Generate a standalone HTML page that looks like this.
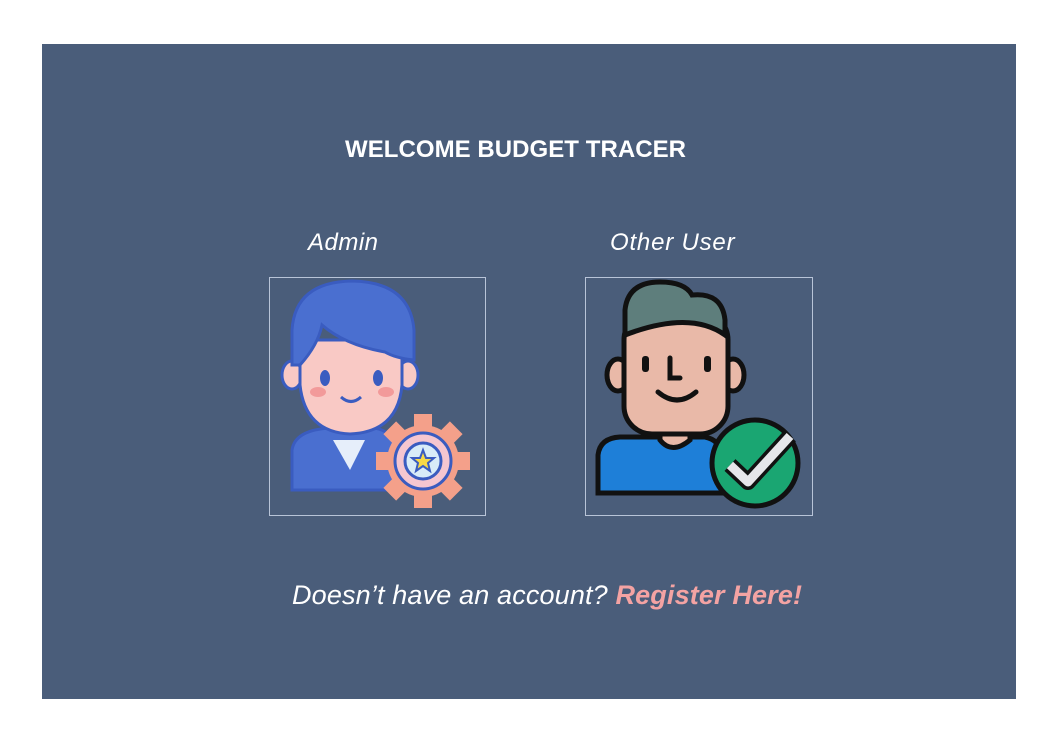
<!DOCTYPE html>
<html><head><style>
body{margin:0;width:1054px;height:750px;background:#fff;position:relative;overflow:hidden;font-family:"Liberation Sans",sans-serif}
.panel{position:absolute;left:42px;top:44px;width:974px;height:655px;background:#4a5d7a}
.t{position:absolute;color:#fff;white-space:nowrap}
.box{position:absolute;border:1px solid #b8c4d8;box-sizing:border-box}
</style></head><body>
<div class="panel"></div>
<div class="t" style="left:345px;top:136px;font-size:24px;font-weight:bold;letter-spacing:0.05px">WELCOME BUDGET TRACER</div>
<div class="t" style="left:308px;top:229px;font-size:24px;font-style:italic;letter-spacing:0.5px">Admin</div>
<div class="t" style="left:610px;top:229px;font-size:24px;font-style:italic;letter-spacing:0.8px">Other User</div>
<div class="box" style="left:269px;top:277px;width:217px;height:239px"></div>
<div class="box" style="left:585px;top:277px;width:228px;height:239px"></div>
<svg style="position:absolute;left:0;top:0" width="1054" height="750">
 <path d="M292 490 L292 450 Q295 430 330 428 L375 428 Q395 432 395 450 L395 490 Z" fill="#4a6fd0" stroke="#3a5cc0" stroke-width="3"/>
 <path d="M333 440 L365 440 L350 470 Z" fill="#e6eefa"/>
 <ellipse cx="292" cy="375" rx="10" ry="14" fill="#f9c9c5" stroke="#3a5cc0" stroke-width="3"/>
 <ellipse cx="408" cy="375" rx="10" ry="14" fill="#f9c9c5" stroke="#3a5cc0" stroke-width="3"/>
 <path d="M300 340 L300 385 Q305 432 350 434 Q398 432 402 385 L402 340 Z" fill="#f9c9c5" stroke="#3a5cc0" stroke-width="3"/>
 <path d="M292 365 L292 330 Q295 282 352 281 Q410 282 414 330 L414 360 Q395 358 385 352 Q345 345 322 325 Q318 345 300 365 Z" fill="#4a6fd0" stroke="#3a5cc0" stroke-width="3"/>
 <ellipse cx="325" cy="378" rx="5" ry="8" fill="#3a5cc0"/><ellipse cx="378" cy="378" rx="5" ry="8" fill="#3a5cc0"/>
 <ellipse cx="318" cy="392" rx="8" ry="5" fill="#f29a9a"/><ellipse cx="386" cy="392" rx="8" ry="5" fill="#f29a9a"/>
 <path d="M341 397 Q351 406 361 397" stroke="#3a5cc0" stroke-width="3" fill="none"/>
 <g transform="translate(423,461)">
  <g fill="#f4a08a">
   <rect x="-9" y="-47" width="18" height="94"/><rect x="-47" y="-9" width="94" height="18"/>
   <rect x="-9" y="-47" width="18" height="94" transform="rotate(45)"/><rect x="-9" y="-47" width="18" height="94" transform="rotate(-45)"/>
  </g>
  <circle r="36" fill="#f4a08a"/>
  <circle r="28" fill="#f5c6d0" stroke="#3a5cc0" stroke-width="3"/>
  <circle r="18" fill="#d8ecf8" stroke="#3a5cc0" stroke-width="3"/>
  <path d="M0 -11 L3 -3 L11 -3 L5 2 L7 10 L0 5 L-7 10 L-5 2 L-11 -3 L-3 -3 Z" fill="#f7d948" stroke="#3a5cc0" stroke-width="2"/>
 </g>
 <path d="M598 493 L598 455 Q600 438 620 437 L705 437 Q720 440 722 455 L722 493 Z" fill="#1e7fd8" stroke="#111" stroke-width="5"/>
 <path d="M660 420 L660 440 Q672 455 690 440 L690 420 Z" fill="#e9b9a8" stroke="#111" stroke-width="5"/>
 <ellipse cx="618" cy="375" rx="11" ry="16" fill="#e9b9a8" stroke="#111" stroke-width="5"/>
 <ellipse cx="733" cy="375" rx="11" ry="16" fill="#e9b9a8" stroke="#111" stroke-width="5"/>
 <rect x="624" y="312" width="104" height="122" rx="28" fill="#e9b9a8" stroke="#111" stroke-width="5"/>
 <path d="M625 335 L625 310 Q628 282 660 282 Q685 282 692 295 Q722 292 725 320 L725 335 Q690 310 625 335 Z" fill="#5e7e7c" stroke="#111" stroke-width="5"/>
 <rect x="642" y="356" width="7" height="16" rx="3" fill="#111"/><rect x="704" y="356" width="7" height="16" rx="3" fill="#111"/>
 <path d="M670 358 L670 378 L680 378" stroke="#111" stroke-width="5" fill="none" stroke-linecap="round"/>
 <path d="M658 392 Q677 408 696 392" stroke="#111" stroke-width="5" fill="none" stroke-linecap="round"/>
 <circle cx="755" cy="463" r="43" fill="#1aa672" stroke="#111" stroke-width="5"/>
 <path d="M730 465 L748 482 L790 436" stroke="#111" stroke-width="16" fill="none" stroke-linejoin="round"/>
 <path d="M730 465 L748 482 L790 436" stroke="#e6e6ea" stroke-width="9" fill="none" stroke-linejoin="round"/>
</svg>
<div class="t" style="left:292px;top:580px;font-size:27px;font-style:italic;letter-spacing:0.15px">Doesn’t have an account? <b style="color:#f4a3a3">Register Here!</b></div>
</body></html>
